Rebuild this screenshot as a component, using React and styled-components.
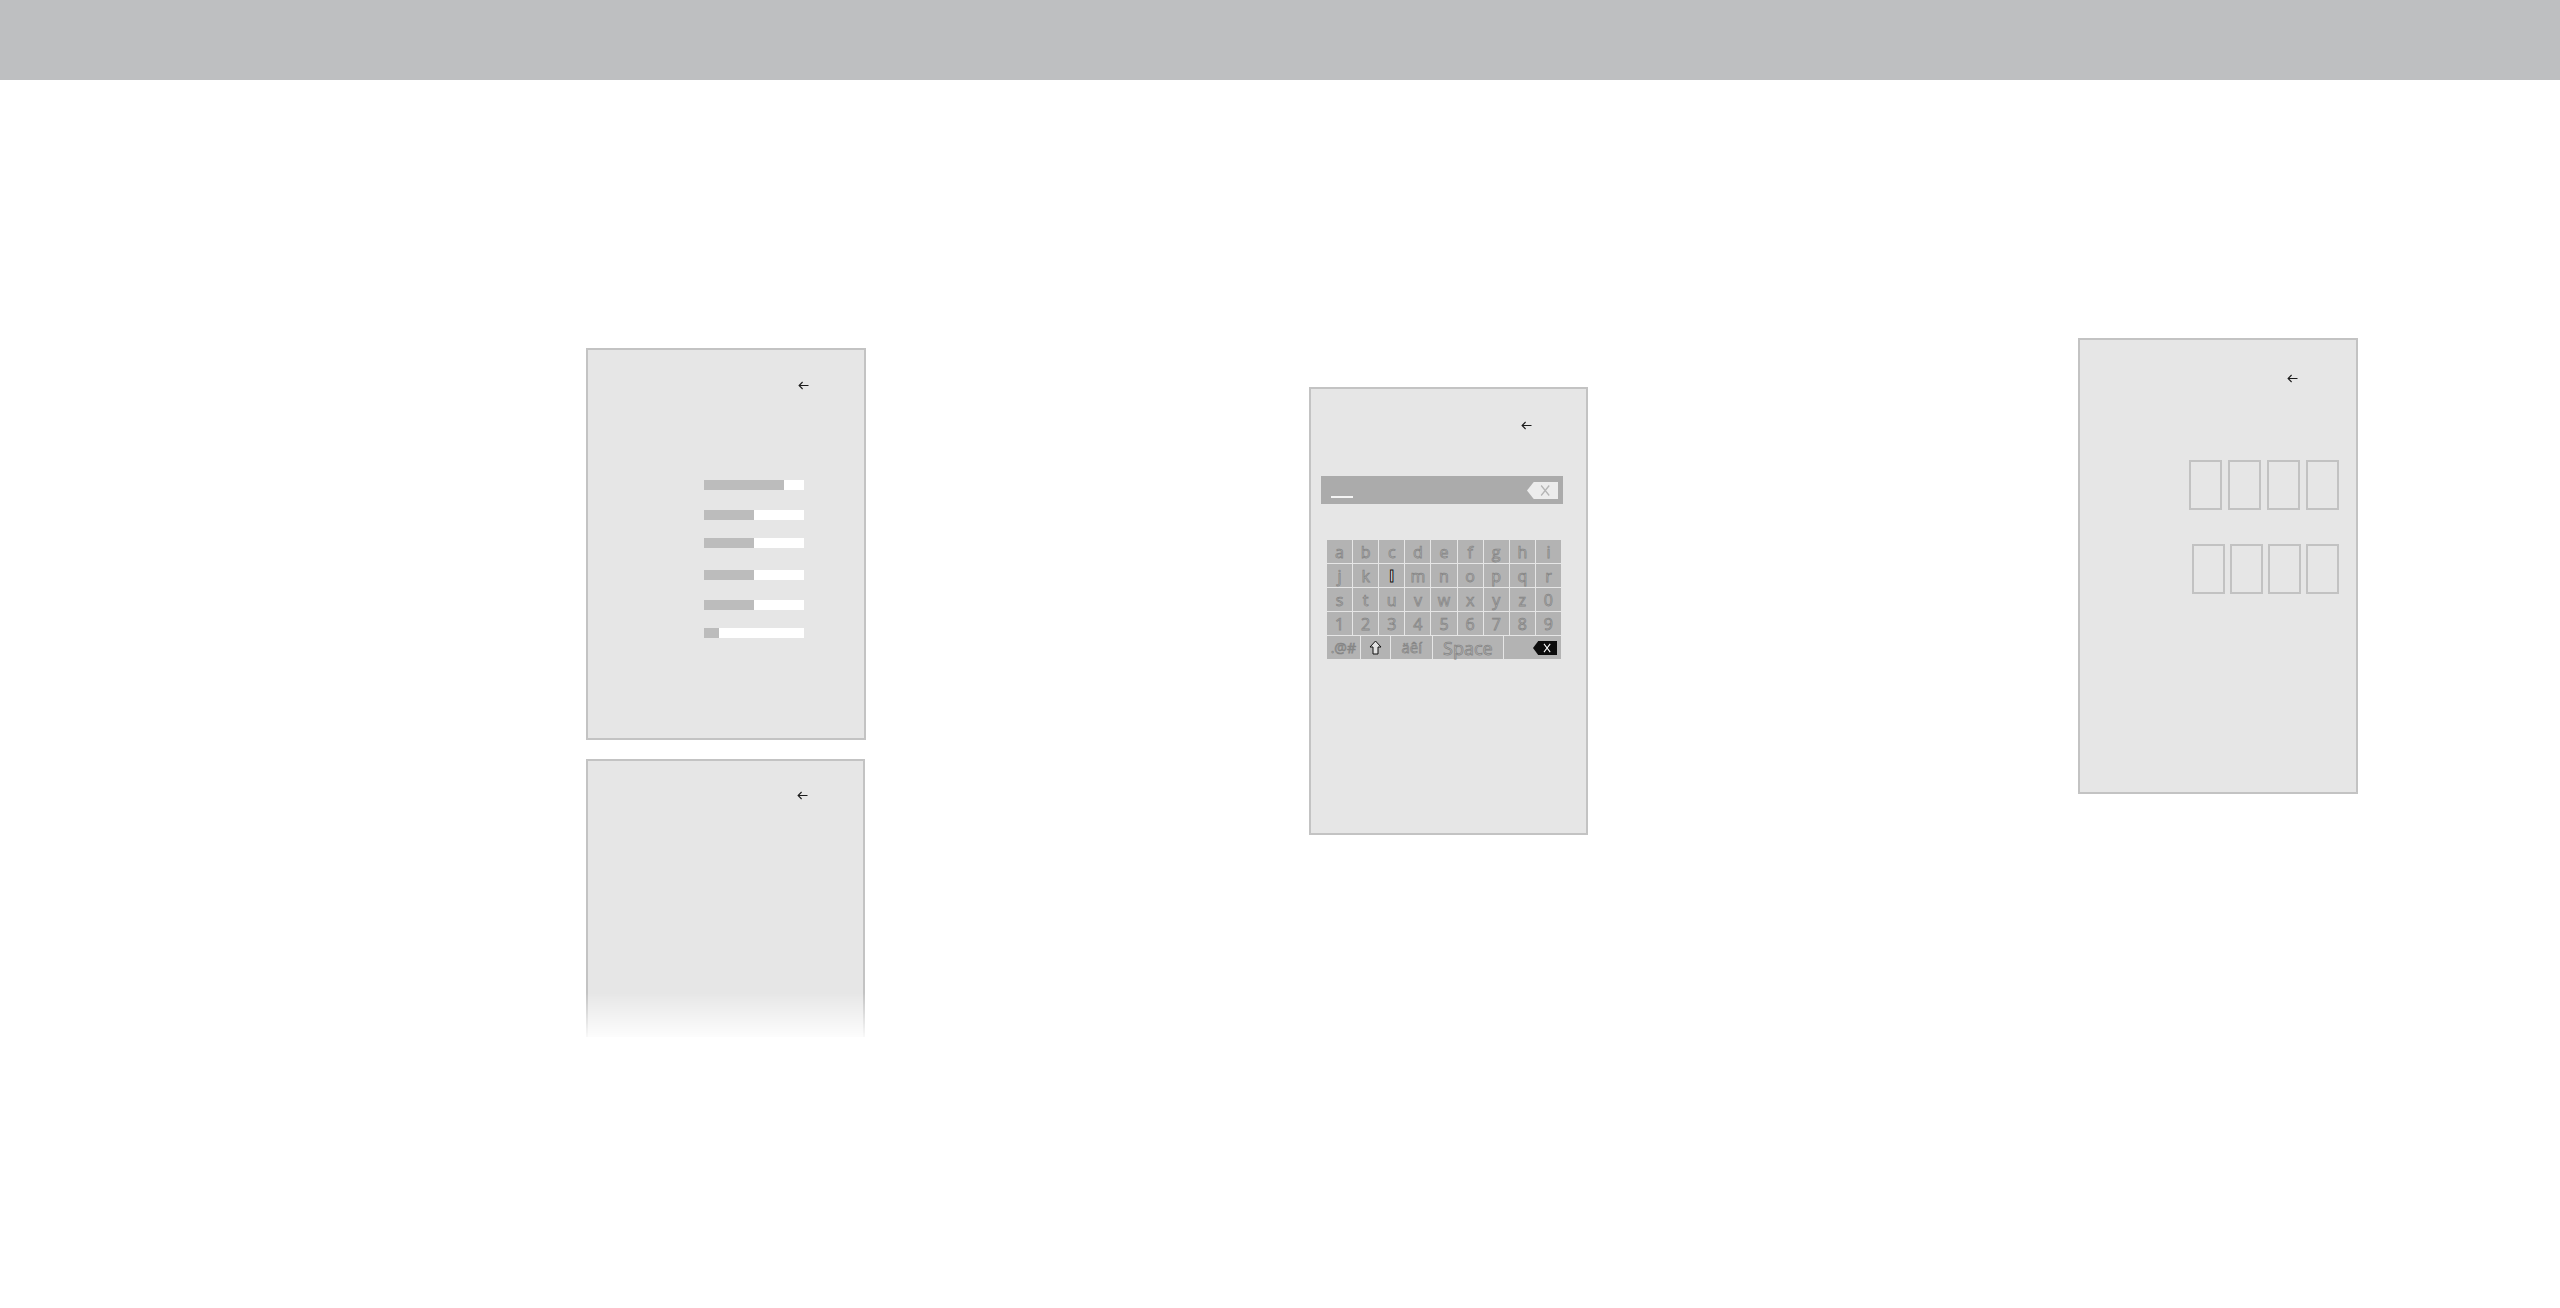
import React from "react";
import styled, {createGlobalStyle} from "styled-components";

const GlobalStyle = createGlobalStyle`
  html, body {
    margin: 0;
    padding: 0;
    background: #ffffff;
    font-family: "Noto Sans", "DejaVu Sans", sans-serif;
  }
  #root {
    min-height: 1308px;
  }
`

const TopBar = styled.div`
  height: 80px;
  background-color: #bebfc1;
`

const Stage = styled.div`
  display: flex;
  align-items: flex-start;
  padding-left: 586px;
`

const Column = styled.div`
  display: flex;
  flex-direction: column;
  gap: 19px;
  margin-top: ${props => props.$top}px;
  margin-left: ${props => props.$left || 0}px;
`

const Panel = styled.div`
  box-sizing: border-box;
  width: ${props => props.$w}px;
  height: ${props => props.$h}px;
  background-color: #e6e6e6;
  border: 2px solid #c3c3c3;
  display: flex;
  flex-direction: column;
`

const FadedPanel = styled(Panel)`
  border-bottom: none;
  -webkit-mask-image: linear-gradient(to bottom, #000 0, #000 84%, rgba(0,0,0,0.1) 100%);
  mask-image: linear-gradient(to bottom, #000 0, #000 84%, rgba(0,0,0,0.1) 100%);
`

const Header = styled.div`
  display: flex;
  justify-content: flex-end;
  padding: ${props => props.$top}px ${props => props.$right}px 0 0;
  height: 10px;
`

const BackArrow = () => (
    <svg width="11" height="9" viewBox="0 0 11 9">
        <path d="M10.5 4.5 H1.2 M4.6 1 L1.1 4.5 L4.6 8" fill="none" stroke="#1c1c1c" strokeWidth="1.1"/>
    </svg>
)

/* sliders panel */

const SliderList = styled.div`
  display: flex;
  flex-direction: column;
  padding-left: 116px;
`

const Slider = styled.div`
  width: 100px;
  height: 10px;
  background-color: #ffffff;
  margin-top: ${props => props.$mt}px;
`

const SliderFill = styled.div`
  height: 100%;
  background-color: #bcbcbc;
`

const sliders = [
    {fill: 80, mt: 89},
    {fill: 50, mt: 20},
    {fill: 50, mt: 18},
    {fill: 50, mt: 22},
    {fill: 50, mt: 20},
    {fill: 15, mt: 18},
]

/* keyboard panel */

const InputBar = styled.div`
  margin: 45px 0 0 10px;
  width: 242px;
  height: 28px;
  background-color: #ababab;
  display: flex;
  align-items: center;
  justify-content: space-between;
  padding: 0 5px 0 10px;
  box-sizing: border-box;
`

const Cursor = styled.div`
  width: 22px;
  height: 2px;
  background-color: #f4f4f4;
  margin-top: 14px;
`

const Keyboard = styled.div`
  margin: 36px 0 0 16px;
  width: 234px;
  display: flex;
  flex-direction: column;
  gap: 1px;
`

const KeyGrid = styled.div`
  display: grid;
  grid-template-columns: repeat(9, 1fr);
  gap: 1px;
`

const KeyRow = styled.div`
  display: flex;
  gap: 1px;
`

const Key = styled.div`
  height: 23px;
  flex: ${props => props.$flex || 1};
  background-color: #b3b3b3;
  display: flex;
  align-items: center;
  justify-content: ${props => props.$align || "center"};
  padding: 0 ${props => props.$pad || 0}px;
  font-family: "Open Sans", "Noto Sans", sans-serif;
  font-size: ${props => props.$size || 16}px;
  font-weight: ${props => props.$active ? 700 : 400};
  color: ${props => props.$active ? "#e8e8e8" : "#b8b8b8"};
  -webkit-text-stroke: ${props => props.$active ? "1px #111" : "0.75px #858585"};
  line-height: 1;
`

const rows = ["abcdefghi", "jklmnopqr", "stuvwxyz0", "123456789"]

const ShiftIcon = () => (
    <svg width="13" height="15" viewBox="0 0 13 15">
        <path d="M6.5 1 L12 7 H9 V14 H4 V7 H1 Z" fill="#e2e2e2" stroke="#111" strokeWidth="1"/>
    </svg>
)

const EraseIcon = ({fill, cross, w, h}) => (
    <svg width={w} height={h} viewBox="0 0 23 12" preserveAspectRatio="none">
        <path d="M5 0 H23 V12 H5 L0 6 Z" fill={fill}/>
        <path d="M10.5 2.5 L16.5 9.5 M16.5 2.5 L10.5 9.5" stroke={cross} strokeWidth="1"/>
    </svg>
)

/* pin panel */

const PinRows = styled.div`
  display: flex;
  flex-direction: column;
  align-items: flex-end;
  gap: 34px;
  padding: 76px 17px 0 0;
`

const PinRow = styled.div`
  display: flex;
  gap: ${props => props.$gap}px;
`

const PinBox = styled.div`
  box-sizing: border-box;
  width: 33px;
  height: 50px;
  border: 2px solid #c2c2c2;
`

export default function App() {
    return (
        <>
            <GlobalStyle/>
            <TopBar/>
            <Stage>
                <Column $top={268}>
                    <Panel $w={280} $h={392}>
                        <Header $top={31} $right={55}>
                            <BackArrow/>
                        </Header>
                        <SliderList>
                            {sliders.map((s, i) => (
                                <Slider key={i} $mt={s.mt}>
                                    <SliderFill style={{width: s.fill + "%"}}/>
                                </Slider>
                            ))}
                        </SliderList>
                    </Panel>
                    <FadedPanel $w={279} $h={278}>
                        <Header $top={30} $right={55}>
                            <BackArrow/>
                        </Header>
                    </FadedPanel>
                </Column>
                <Column $top={307} $left={443}>
                    <Panel $w={279} $h={448}>
                        <Header $top={32} $right={54}>
                            <BackArrow/>
                        </Header>
                        <InputBar>
                            <Cursor/>
                            <EraseIcon fill="#ececec" cross="#b5b5b5" w={31} h={17}/>
                        </InputBar>
                        <Keyboard>
                            <KeyGrid>
                                {rows.join("").split("").map(ch => (
                                    <Key key={ch} $active={ch === "l"}>{ch}</Key>
                                ))}
                            </KeyGrid>
                            <KeyRow>
                                <Key $flex={34} $size={14}>.@#</Key>
                                <Key $flex={31}><ShiftIcon/></Key>
                                <Key $flex={42} $size={15}>äêí</Key>
                                <Key $flex={73} $size={18}>Space</Key>
                                <Key $flex={51} $align="flex-end" $pad={4}>
                                    <EraseIcon fill="#0c0c0c" cross="#ffffff" w={24} h={14}/>
                                </Key>
                            </KeyRow>
                        </Keyboard>
                    </Panel>
                </Column>
                <Column $top={258} $left={490}>
                    <Panel $w={280} $h={456}>
                        <Header $top={34} $right={58}>
                            <BackArrow/>
                        </Header>
                        <PinRows>
                            <PinRow $gap={6}>
                                <PinBox/><PinBox/><PinBox/><PinBox/>
                            </PinRow>
                            <PinRow $gap={5}>
                                <PinBox/><PinBox/><PinBox/><PinBox/>
                            </PinRow>
                        </PinRows>
                    </Panel>
                </Column>
            </Stage>
        </>
    )
}
